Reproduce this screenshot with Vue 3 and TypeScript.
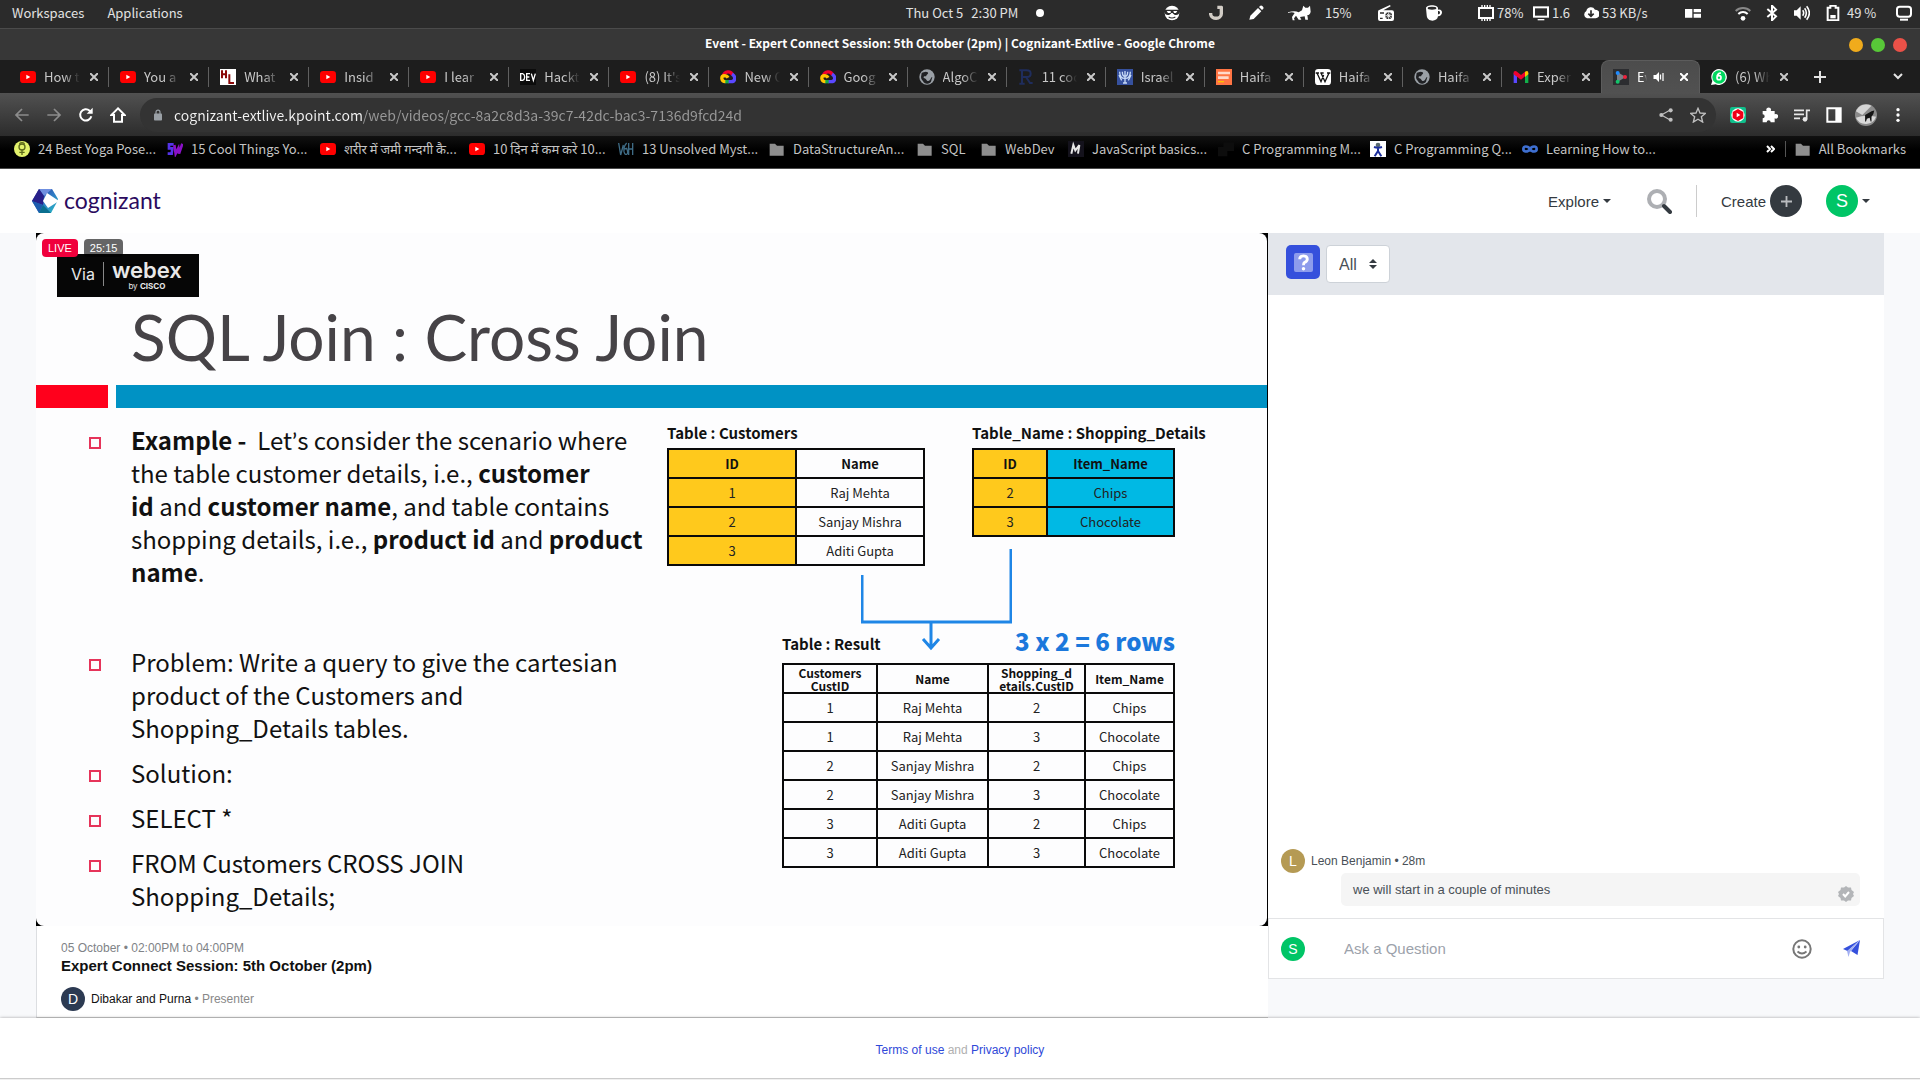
<script setup lang="ts">
import { ref } from 'vue'

interface TraySlot { icon?: string; text?: string; width: number }
interface Tab { icon: string; label: string; active?: boolean }
interface Bookmark { icon: string; label: string; width: number }

const youtube = '<rect y="3" width="24" height="18" rx="5" fill="#f00"/><path d="M9.5 8.5l6 3.5-6 3.5z" fill="#fff"/>'
const globe = '<circle cx="12" cy="12" r="11.5" fill="#9aa0a6"/><path d="M4 6c3-1 6-3 9-1 2 2-1 3-2 5s-3 0-4 2 3 2 4 4 3 3 5 1 1-4 4-5l-2 7c-3 4-9 4-11 1-1-3-4-4-4-8z" fill="#202124"/>'
const cloudLogo = '<path d="M5 10C7 3 16 2 19 9" fill="none" stroke="#f0002f" stroke-width="5"/><path d="M18 8c6 3 5 11-1 11h-5" fill="none" stroke="#5a48ff" stroke-width="5"/><path d="M13 19H7" fill="none" stroke="#12a84a" stroke-width="5"/><path d="M8 19c-6 0-7-8-2-9 3 0 5 1 6 3" fill="none" stroke="#ffc400" stroke-width="5"/>'
const folder = '<path d="M1 4h8l3 3h10v15H1z" fill="#8e8e8e"/>'

const glyphs: Record<string, string> = {
  youtube, globe, cloudLogo, folder,
  face: '<circle cx="12" cy="12" r="11" fill="#fff"/><path d="M0 7h24v2c-1 5-3 6-6 6-4 0-4-3-6-3s-2 3-6 3c-3 0-5-1-6-6z" fill="#2b2b2b"/><path d="M4 9h6v3H6zM14 9h6l-2 3h-3z" fill="#fff"/><path d="M7 18q5 3 10 0" stroke="#2b2b2b" stroke-width="1.6" fill="none"/>',
  magnet: '<path d="M14 3.500h7M20 2v11c0 9-15 9-16 1v-2" fill="none" stroke="#d2cdc6" stroke-width="5"/>',
  pencil: '<path d="M2 22l1.500-6L15 4.500l5 5L8.500 21zM16.500 3l2-2q1.500-1 3 .5l1 1q1.500 1.500.5 3l-2 2z" fill="#fff"/>',
  cat: '<path d="M0 11q10-3 16 0l5-3 2-7 3 3h4l3-3 1 9q-1 5-5 5l1 7h-4l-1-5-7 1 2 4h-4l-4-6-3 4 1 3h-3l-1-5 4-6q-4-2-10 0z" fill="#fff"/>',
  radio: '<path d="M1 8L18 0l1 2L8 8h13q3 0 3 3v10q0 3-3 3H3q-3 0-3-3V11q0-3 1-3z" fill="#fff"/><circle cx="16" cy="16" r="5" fill="#2b2b2b"/><path d="M13 13l6 6M19 13l-6 6M16 11v10M11 16h10" stroke="#fff" stroke-width="1.200"/><path d="M3 12h6M3 20h4" stroke="#2b2b2b" stroke-width="2"/>',
  cup: '<path d="M0 5c0-6 18-6 18 0v2c8-2 8 10 0 10-1 9-17 9-17-2z" fill="#fff"/><ellipse cx="9" cy="5" rx="6.500" ry="2.200" fill="#2b2b2b"/><path d="M18 9c4-1 4 5 0 5z" fill="#2b2b2b"/>',
  chip: '<rect x="1.500" y="4.500" width="21" height="15" fill="none" stroke="#fff" stroke-width="3"/><path d="M6 0v4M10 0v4M14 0v4M18 0v4M6 20v4M10 20v4M14 20v4M18 20v4" stroke="#fff" stroke-width="2"/>',
  monitor: '<rect x="1.500" y="3.500" width="21" height="14" fill="none" stroke="#fff" stroke-width="3"/><path d="M7 21h10v2H7z" fill="#fff"/>',
  cloud: '<path d="M6 20a6 6 0 0 1-1-11 7 7 0 0 1 13-2 6.500 6.500 0 0 1 1 13z" fill="#fff"/><path d="M12 8v8M8 13l4 4 4-4" stroke="#2b2b2b" stroke-width="2.500" fill="none"/>',
  tiles: '<path d="M0 6h11v13H0zM13 6h11v5H13zM13 13h11v6H13z" fill="#fff"/>',
  wifi: '<path d="M1 9c6-6 16-6 22 0" stroke="#888" stroke-width="3" fill="none"/><path d="M5 13.500c4-4 10-4 14 0" stroke="#fff" stroke-width="3" fill="none"/><circle cx="12" cy="20" r="3.500" fill="#fff"/>',
  bluetooth: '<path d="M5 6l13 11-6 6V1l6 6L5 18" stroke="#fff" stroke-width="3" fill="none"/>',
  volume: '<path d="M0 8h4l6-6v20l-6-6H0z" fill="#fff"/><path d="M13 8q3 4 0 8M16 5q5 7 0 14M19 2q8 10 0 20" stroke="#fff" stroke-width="2.400" fill="none"/>',
  battery: '<path d="M8 1h8v3h4v19H4V4h4z" fill="none" stroke="#fff" stroke-width="3"/><path d="M8 15h8v5H8z" fill="#fff"/>',
  screen: '<rect x="1.500" y="2.500" width="21" height="15" rx="4" fill="none" stroke="#fff" stroke-width="3"/><path d="M6 22h12" stroke="#fff" stroke-width="3"/>',
  hl: '<path d="M0 0h24v24H0z" fill="#fff"/><path d="M3 2v12M9 2v12M3 8h6M14 8v13h7" stroke="#8b0a0a" stroke-width="3" fill="none"/>',
  dev: '<path d="M0 0h24v24H0z" fill="#0c0c0c"/><path d="M1 7v10h3q3-1 3-5t-3-5zM15 7h-5v10h5M10 12h4M17 7l3 10 3-10" fill="none" stroke="#fff" stroke-width="2"/>',
  serifR: '<path d="M6 2v20M2 2h11q6 0 6 5t-6 5H7M12 12l6 9h4M2 22h8" fill="none" stroke="#1f2d5c" stroke-width="3"/>',
  israel: '<path d="M0 0h24v24H0z" fill="#36519e"/><path d="M4 4q0 10 8 10t8-10M8 4q0 7 4 7t4-7M12 3v18M9 21h6M3 9l4 8M21 9l-4 8" stroke="#c9dcf7" stroke-width="2" fill="none"/>',
  haifa: '<path d="M0 0h24v24H0z" fill="#ff7544"/><path d="M3 6h18M3 13h16" stroke="#ffd9cb" stroke-width="4"/><path d="M3 19h9" stroke="#ffc400" stroke-width="2"/>',
  wiki: '<rect width="24" height="24" rx="5" fill="#fff"/><path d="M3 6l6 13 4-10M9 6l6 13 6-13M1 6h5M8 6h5M18 6h5" stroke="#111" stroke-width="2" fill="none"/>',
  gmail: '<path d="M1 6v15h5V11z" fill="#5a48ff"/><path d="M23 6v15h-5V11z" fill="#12b04a"/><path d="M1 4q3-2 5 0l6 5 6-5v7l-6 5-11-8z" fill="#f0002f"/><path d="M18 4q5-3 5 2v2l-5 4z" fill="#ffc400"/>',
  kpoint: '<path d="M0 0h24v24H0z" fill="#2c2d30"/><path d="M6 4v16l13-8z" fill="#7b7f86"/><circle cx="7" cy="6" r="3" fill="#1f8bff"/><circle cx="7" cy="19" r="3" fill="#12c46a"/><circle cx="18" cy="12" r="3" fill="#f0203c"/>',
  whatsapp: '<path d="M12 0a12 12 0 1 1-5 23l-7 1 2-6A12 12 0 0 1 12 0z" fill="#fff"/><circle cx="12" cy="12" r="10" fill="#00d95f"/><path d="M15 6q-6 0-6 7a3 3 0 1 0 3-3q-3 0-3 3" fill="none" stroke="#fff" stroke-width="2.500"/>',
  yoga: '<ellipse cx="12" cy="12" rx="12" ry="12" fill="#e3f36c"/><circle cx="12" cy="9" r="4.500" fill="none" stroke="#5d6a1a" stroke-width="2"/><path d="M12 13v8M8 17h8M8 4q4-3 8 0" fill="none" stroke="#5d6a1a" stroke-width="2"/>',
  sw: '<path d="M10 5H3v6h5l-1 8H1" stroke="#5533e8" stroke-width="4" fill="none"/><path d="M11 6l2 13 4-8 1 8 5-15" stroke="#8a10c8" stroke-width="4" fill="none"/>',
  v6h: '<path d="M1 3l3 18L8 6M13 3q-5 5-4 13 1 5 4 4t0-9l-3 1M16 3v18M22 3v18M16 12h6" stroke="#3f6c86" stroke-width="2" fill="none"/>',
  mdn: '<path d="M0 0h24v24H0z" fill="#14121c"/><path d="M5 19L8 6l3 8 6-8-2 13" stroke="#e8e8e8" stroke-width="3" fill="none"/>',
  dark: '<path d="M8 2h16v13H14v8H0V9h8z" fill="#0d0d0d"/>',
  stick: '<path d="M0 0h24v24H0z" fill="#fff"/><circle cx="12" cy="6" r="3.500" fill="#5a6a70"/><path d="M6 9q6 2 12 0M12 9v6l-5 8M12 15l5 8" stroke="#1c2f9c" stroke-width="3" fill="none"/>',
  infinity: '<path d="M12 12c3-5 10-5 10 0s-7 5-10 0-10-5-10 0 7 5 10 0z" fill="none" stroke="#3e6fd0" stroke-width="4"/>'
}

const tray: TraySlot[] = [
  { icon: 'face', width: 44 }, { icon: 'magnet', width: 40 }, { icon: 'pencil', width: 40 },
  { icon: 'cat', width: 37 }, { text: '15%', width: 53 }, { icon: 'radio', width: 48 },
  { icon: 'cup', width: 52 }, { icon: 'chip', width: 19 }, { text: '78%', width: 36 },
  { icon: 'monitor', width: 19 }, { text: '1.6', width: 31 }, { icon: 'cloud', width: 19 },
  { text: '53 KB/s', width: 83 }, { icon: 'tiles', width: 50 }, { icon: 'wifi', width: 29 },
  { icon: 'bluetooth', width: 30 }, { icon: 'volume', width: 31 }, { icon: 'battery', width: 22 },
  { text: '49 %', width: 49 }, { icon: 'screen', width: 16 }
]

const tabs: Tab[] = [
  { icon: 'youtube', label: 'How t' }, { icon: 'youtube', label: 'You a' },
  { icon: 'hl', label: 'What' }, { icon: 'youtube', label: 'Insid' },
  { icon: 'youtube', label: 'I lear' }, { icon: 'dev', label: 'Hackt' },
  { icon: 'youtube', label: "(8) It's" }, { icon: 'cloudLogo', label: 'New C' },
  { icon: 'cloudLogo', label: 'Goog' }, { icon: 'globe', label: 'AlgoC' },
  { icon: 'serifR', label: '11 coo' }, { icon: 'israel', label: 'Israel' },
  { icon: 'haifa', label: 'Haifa' }, { icon: 'wiki', label: 'Haifa' },
  { icon: 'globe', label: 'Haifa' }, { icon: 'gmail', label: 'Exper' },
  { icon: 'kpoint', label: 'Ev', active: true }, { icon: 'whatsapp', label: '(6) Wh' }
]

const bookmarks: Bookmark[] = [
  { icon: 'yoga', label: '24 Best Yoga Pose...', width: 113 },
  { icon: 'sw', label: '15 Cool Things Yo...', width: 113 },
  { icon: 'youtube', label: 'शरीर में जमी गन्दगी कै...', width: 109 },
  { icon: 'youtube', label: '10 दिन में कम करे 10...', width: 109 },
  { icon: 'v6h', label: '13 Unsolved Myst...', width: 111 },
  { icon: 'folder', label: 'DataStructureAn...', width: 108 },
  { icon: 'folder', label: 'SQL', width: 24 },
  { icon: 'folder', label: 'WebDev', width: 47 },
  { icon: 'mdn', label: 'JavaScript basics...', width: 110 },
  { icon: 'dark', label: 'C Programming M...', width: 112 },
  { icon: 'stick', label: 'C Programming Q...', width: 112 },
  { icon: 'infinity', label: 'Learning How to...', width: 106 }
]

const customers = [['1', 'Raj Mehta'], ['2', 'Sanjay Mishra'], ['3', 'Aditi Gupta']]
const shopping = [['2', 'Chips'], ['3', 'Chocolate']]
const result = customers.flatMap(([id, name]) => shopping.map(([sid, item]) => [id, name, sid, item]))

const url = ref('cognizant-extlive.kpoint.com/web/videos/gcc-8a2c8d3a-39c7-42dc-bac3-7136d9fcd24d')
const filter = ref('All')
const question = ref('')
</script>

<template>
  <div class="desktop">
    <header class="system-bar">
      <nav class="system-menu">
        <button>Workspaces</button>
        <button>Applications</button>
      </nav>
      <div class="clock"><span>Thu Oct 5</span><span>2:30 PM</span></div>
      <div class="tray">
        <span class="notice-dot"></span>
        <div class="tray-slots">
          <span v-for="(slot, i) in tray" :key="i" class="slot" :style="{ width: slot.width + 'px' }">
            <svg v-if="slot.icon" :class="['glyph', { wide: slot.icon === 'cat' }]" :viewBox="slot.icon === 'cat' ? '0 0 36 24' : '0 0 24 24'"><g v-html="glyphs[slot.icon]"></g></svg>
            <template v-else>{{ slot.text }}</template>
          </span>
        </div>
      </div>
    </header>

    <div class="title-bar">
      <span class="window-title">Event - Expert Connect Session: 5th October (2pm) | Cognizant-Extlive - Google Chrome</span>
      <div class="window-buttons">
        <button class="min" aria-label="Minimize"></button>
        <button class="max" aria-label="Maximize"></button>
        <button class="close" aria-label="Close"></button>
      </div>
    </div>

    <div class="tab-strip">
      <div class="tabs">
        <div v-for="(tab, i) in tabs" :key="i" :class="['tab', { active: tab.active }]">
          <svg class="glyph" viewBox="0 0 24 24"><g v-html="glyphs[tab.icon]"></g></svg>
          <span class="tab-label">{{ tab.label }}</span>
          <svg v-if="tab.active" class="speaker" viewBox="0 0 24 24"><path d="M1 8h5l6-6v20l-6-6H1z" fill="#fff" /><path d="M15 7v10M20 4v16" stroke="#fff" stroke-width="2.500" /></svg>
          <button class="tab-close" aria-label="Close tab"><svg viewBox="0 0 8 8"><path d="M0 0l8 8M8 0L0 8" stroke="currentColor" stroke-width="2" /></svg></button>
        </div>
      </div>
      <div class="tab-tools">
        <button aria-label="New tab"><svg width="12" height="12" viewBox="0 0 12 12"><path d="M6 0v12M0 6h12" stroke="#e4e4e4" stroke-width="2" /></svg></button>
        <button aria-label="Search tabs"><svg width="10" height="8" viewBox="0 0 10 8"><path d="M1 1l4 4 4-4" fill="none" stroke="#e4e4e4" stroke-width="2" /></svg></button>
      </div>
    </div>

    <div class="toolbar">
      <div class="nav-buttons">
        <button aria-label="Back"><svg viewBox="0 0 24 24"><path d="M22 12H4M12 3l-9 9 9 9" fill="none" stroke="#8c8c8c" stroke-width="2.600" /></svg></button>
        <button aria-label="Forward"><svg viewBox="0 0 24 24"><path d="M2 12h18M12 3l9 9-9 9" fill="none" stroke="#8c8c8c" stroke-width="2.600" /></svg></button>
        <button aria-label="Reload"><svg viewBox="0 0 24 24"><path d="M20 14a8.500 8.500 0 1 1-2.500-8.500L20 8" fill="none" stroke="#fff" stroke-width="3" /><path d="M22 1v9h-9z" fill="#fff" /></svg></button>
        <button aria-label="Home"><svg viewBox="0 0 24 24"><path d="M12 2L2 12h4v10h12V12h4z" fill="none" stroke="#fff" stroke-width="3" /></svg></button>
      </div>
      <form class="omnibox" @submit.prevent>
        <svg class="lock" viewBox="0 0 10 14"><path d="M1 5h8a1 1 0 0 1 1 1v7a1 1 0 0 1-1 1H1a1 1 0 0 1-1-1V6a1 1 0 0 1 1-1z" fill="#9aa0a6" /><path d="M2.500 6V3.500a2.500 2.500 0 0 1 5 0V6" fill="none" stroke="#9aa0a6" stroke-width="1.500" /></svg>
        <input v-model="url" class="url" aria-label="Address" spellcheck="false" />
        <button aria-label="Share"><svg width="14" height="16" viewBox="0 0 24 24"><path d="M20 3L4 12l16 9" fill="none" stroke="#c0c0c0" stroke-width="2" /><circle cx="20" cy="4" r="3.500" fill="#c0c0c0" /><circle cx="4" cy="12" r="3.500" fill="#c0c0c0" /><circle cx="20" cy="20" r="3.500" fill="#c0c0c0" /></svg></button>
        <button aria-label="Bookmark"><svg width="16" height="16" viewBox="0 0 24 24"><path d="M12 2l3 7 8 .6-6 5 2 8-7-4.200-7 4.200 2-8-6-5L9 9z" fill="none" stroke="#c0c0c0" stroke-width="2" /></svg></button>
      </form>
      <div class="extensions">
        <button aria-label="Video extension"><svg viewBox="0 0 24 24"><rect width="24" height="24" rx="3" fill="#10c08c" /><circle cx="12" cy="12" r="10" fill="#fff" /><path d="M12 3l8 4.500v9L12 21l-8-4.500v-9z" fill="#f00018" /><path d="M10 8.500l5.500 3.500-5.500 3.500z" fill="#fff" /></svg></button>
        <button aria-label="Extensions"><svg viewBox="0 0 24 24"><path d="M7 6a3.500 3.500 0 1 1 6 0h6v5a3.500 3.500 0 1 1 0 6v6h-6a3 3 0 0 0-6 0H1v-6a3 3 0 0 0 0-6V6z" fill="#fff" /></svg></button>
        <button aria-label="Media"><svg viewBox="0 0 24 24"><path d="M0 5h15M0 11h15M0 17h9M19 18V5h5" fill="none" stroke="#e8e8e8" stroke-width="2.500" /><circle cx="16.500" cy="18.500" r="3.500" fill="#e8e8e8" /></svg></button>
        <button aria-label="Side panel"><svg viewBox="0 0 24 24"><path d="M2 2h20v20H2z" fill="none" stroke="#fff" stroke-width="3" /><path d="M14 2h8v20h-8z" fill="#fff" /></svg></button>
        <button class="profile" aria-label="Profile"><svg viewBox="0 0 24 24"><circle cx="12" cy="12" r="12" fill="#8b8b8b" /><path d="M1 8A12 12 0 0 1 18 2L8 12z" fill="#d5d5d5" /><path d="M1 15q10-4 22-1a12 12 0 0 1-22 1z" fill="#d9d9d9" /><path d="M11 12q4-2 7-4l3-1-1 4-2 3v5h-1l-1-4-3 1-1 3h-1z" fill="#151515" /></svg></button>
        <button aria-label="Menu"><svg viewBox="0 0 24 24"><circle cx="12" cy="4" r="2.500" fill="#fff" /><circle cx="12" cy="12" r="2.500" fill="#fff" /><circle cx="12" cy="20" r="2.500" fill="#fff" /></svg></button>
      </div>
    </div>

    <nav class="bookmarks">
      <a v-for="(b, i) in bookmarks" :key="i" href="#" class="bookmark">
        <svg class="glyph" viewBox="0 0 24 24"><g v-html="glyphs[b.icon]"></g></svg>
        <span :style="{ width: b.width + 'px' }">{{ b.label }}</span>
      </a>
      <div class="bookmarks-end">
        <button class="more" aria-label="More bookmarks"><svg width="9" height="8" viewBox="0 0 9 8"><path d="M1 1l3 3-3 3M5 1l3 3-3 3" fill="none" stroke="#fff" stroke-width="2" /></svg></button>
        <a href="#" class="bookmark"><svg class="glyph" viewBox="0 0 24 24"><g v-html="glyphs.folder"></g></svg>All Bookmarks</a>
      </div>
    </nav>

    <header class="site-header">
      <a href="#" class="brand">
        <svg width="28" height="24" viewBox="0 0 28 24">
          <defs><linearGradient id="hex" x1="0" y1="0" x2="1" y2="1"><stop offset="0" stop-color="#2a2c8c" /><stop offset=".5" stop-color="#2f78c4" /><stop offset="1" stop-color="#26bfc4" /></linearGradient></defs>
          <path d="M7 0h13l6 10-1 3-6 11H7L0 12z" fill="url(#hex)" />
          <path d="M7 0h13l-8 7z" fill="#6f8fe0" /><path d="M0 12L7 0l5 7-1 9z" fill="#28208a" /><path d="M0 12l11 4-4 8z" fill="#1d5cae" /><path d="M11 16l8 8H7z" fill="#0b6f8f" />
          <path d="M15 4l12 8-11 7-5-7z" fill="#fff" />
        </svg>
        <span>cognizant</span>
      </a>
      <nav class="site-nav">
        <button class="explore">Explore<i class="caret"></i></button>
        <button class="search" aria-label="Search"><svg width="25" height="25" viewBox="0 0 25 25"><circle cx="10" cy="10" r="8" fill="none" stroke="#adafb3" stroke-width="4" /><path d="M17 17l6 6" stroke="#343a40" stroke-width="4" stroke-linecap="round" /></svg></button>
        <button class="create">Create<span class="plus"><svg width="11" height="11" viewBox="0 0 12 12"><path d="M6 0v12M0 6h12" stroke="#b9bcbf" stroke-width="2" /></svg></span></button>
        <button class="account"><span class="avatar large green">S</span><i class="caret"></i></button>
      </nav>
    </header>

    <main class="content">
      <section class="event">
        <div class="video">
          <div class="slide">
            <div class="slide-head">
              <div class="status"><span class="live">LIVE</span><span class="elapsed">25:15</span></div>
              <div class="webex"><span class="via">Via</span><span class="webex-name"><b>webex</b><small>by <strong>CISCO</strong></small></span></div>
              <h1>SQL Join : Cross Join</h1>
            </div>
            <div class="rule"><i class="red"></i><i class="blue"></i></div>
            <div class="slide-body">
              <ul class="points">
                <li><b>Example - </b>&nbsp;Let<span class="apostrophe">’</span>s consider the scenario where<br />the table customer details, i.e., <b>customer<br />id</b> and <b>customer name</b>, and table contains<br />shopping details, i.e., <b>product id</b> and <b>product<br />name</b>.</li>
                <li class="blank"></li>
                <li>Problem: Write a query to give the cartesian<br />product of the Customers and<br />Shopping_Details tables.</li>
                <li>Solution:</li>
                <li>SELECT *</li>
                <li>FROM Customers CROSS JOIN<br />Shopping_Details;</li>
              </ul>
              <div class="diagram">
                <div class="sources">
                  <figure class="customers">
                    <figcaption id="customers-caption">Table : Customers</figcaption>
                    <table aria-labelledby="customers-caption">
                      <thead><tr><th class="gold">ID</th><th>Name</th></tr></thead>
                      <tbody><tr v-for="row in customers" :key="row[0]"><td class="gold">{{ row[0] }}</td><td>{{ row[1] }}</td></tr></tbody>
                    </table>
                  </figure>
                  <figure class="shopping">
                    <figcaption id="shopping-caption">Table_Name : Shopping_Details</figcaption>
                    <table aria-labelledby="shopping-caption">
                      <thead><tr><th class="gold">ID</th><th class="cyan">Item_Name</th></tr></thead>
                      <tbody><tr v-for="row in shopping" :key="row[0]"><td class="gold">{{ row[0] }}</td><td class="cyan">{{ row[1] }}</td></tr></tbody>
                    </table>
                  </figure>
                </div>
                <svg class="connector" width="151" height="102" viewBox="0 0 151 102"><path d="M1 26v47h149V0M70 73v26M62 90l8 9 8-9" fill="none" stroke="#1f86e6" stroke-width="3" /></svg>
                <div class="product">
                  <div class="product-head"><span>Table : Result</span><strong>3 x 2 = 6 rows</strong></div>
                  <table class="result">
                    <colgroup><col class="c1" /><col class="c2" /><col class="c3" /><col class="c4" /></colgroup>
                    <thead><tr><th>Customers<br />CustID</th><th>Name</th><th>Shopping_d<br />etails.CustID</th><th>Item_Name</th></tr></thead>
                    <tbody><tr v-for="(row, i) in result" :key="i"><td v-for="(cell, j) in row" :key="j">{{ cell }}</td></tr></tbody>
                  </table>
                </div>
              </div>
            </div>
          </div>
        </div>
        <div class="event-info">
          <p class="when">05 October • 02:00PM to 04:00PM</p>
          <h2>Expert Connect Session: 5th October (2pm)</h2>
          <p class="presenter"><span class="avatar navy">D</span><span>Dibakar and Purna <em>• Presenter</em></span></p>
        </div>
      </section>

      <aside class="chat">
        <div class="chat-head">
          <button class="ask" aria-label="Questions"><svg width="19" height="19" viewBox="0 0 20 20"><rect width="20" height="20" rx="2" fill="#8d9cec" /><path d="M6 6.500q0-3.500 4-3.500t4 3.500q0 2-3 3.500-1 .7-1 3" fill="none" stroke="#fff" stroke-width="3" /><circle cx="10" cy="16.500" r="1.800" fill="#fff" /></svg></button>
          <label class="filter">
            <select v-model="filter" aria-label="Filter questions"><option>All</option><option>Mine</option></select>
            <svg width="8" height="10" viewBox="0 0 8 10"><path d="M0 4l4-4 4 4zM0 6l4 4 4-4z" fill="#343a40" /></svg>
          </label>
        </div>
        <div class="messages">
          <p class="author"><span class="avatar olive">L</span><span>Leon Benjamin • 28m</span></p>
          <div class="bubble">
            <span>we will start in a couple of minutes</span>
            <svg width="16" height="16" viewBox="0 0 16 16"><path d="M8 0l2 1.500h3l.5 2.500L16 6l-1 2 1 2-2.500 2-.5 2.500h-3L8 16l-2-1.500H3L2.500 12 0 10l1-2-1-2 2.500-2L3 1.500h3z" fill="#b3b5b8" /><path d="M5 8l2.200 2.500L11 6" fill="none" stroke="#fff" stroke-width="2" /></svg>
          </div>
        </div>
        <form class="composer" @submit.prevent>
          <span class="avatar green">S</span>
          <input v-model="question" placeholder="Ask a Question" aria-label="Ask a Question" />
          <button type="button" aria-label="Emoji"><svg width="20" height="20" viewBox="0 0 20 20"><circle cx="10" cy="10" r="8.700" fill="none" stroke="#777" stroke-width="2" /><circle cx="6.800" cy="8" r="1.400" fill="#777" /><circle cx="13.200" cy="8" r="1.400" fill="#777" /><path d="M5.500 12.500q4.500 4 9 0" fill="none" stroke="#777" stroke-width="1.800" /></svg></button>
          <button type="submit" aria-label="Send"><svg width="17" height="17" viewBox="0 0 17 17"><path d="M17 0L0 9l4.500 2z" fill="#3550dc" /><path d="M17 0L8 11l6.500 4z" fill="#3550dc" /><path d="M4 11L16 1 7 12l-1.500 5z" fill="#a3b0f2" /></svg></button>
        </form>
      </aside>
    </main>

    <footer class="site-footer"><p><a href="#">Terms of use</a> and <a href="#">Privacy policy</a></p></footer>
  </div>
</template>

<style>
body { background: #f0f0f0; }
</style>

<style scoped>
*, *::before { box-sizing: border-box; }
button { border: 0; padding: 0; background: none; color: inherit; font: inherit; cursor: pointer; display: flex; align-items: center; justify-content: center; }
a { color: inherit; text-decoration: none; }
p, h1, h2, ul, figure { margin: 0; padding: 0; }
svg { display: block; flex: none; }
.desktop { font-family: "Liberation Sans", Arial, sans-serif; background: #f8f9fb; color: #212529; overflow: hidden; }
.system-bar, .title-bar, .tab-strip, .toolbar, .bookmarks { font-family: "Noto Sans CJK SC", "Noto Sans", sans-serif; font-size: 13px; line-height: 20px; white-space: nowrap; color: #e2e2e2; }
.glyph { width: 16px; height: 16px; }
.glyph.wide { width: 24px; }

.system-bar { height: 29px; display: grid; grid-template-columns: 1fr auto 1fr; align-items: center; padding: 0 8px 2px 12px; background: #2b2b2b; border-bottom: 1px solid #4b4b4b; }
.system-menu { display: flex; gap: 23px; }
.clock { display: flex; gap: 8px; }
.tray { display: flex; align-items: center; justify-content: space-between; padding-left: 18px; }
.notice-dot { width: 8px; height: 8px; border-radius: 50%; background: #fff; }
.tray-slots { display: flex; align-items: center; }
.slot { flex: none; }

.title-bar { height: 31px; display: grid; grid-template-columns: 1fr auto 1fr; align-items: center; padding: 0 13px; background: #373737; color: #fff; font-size: 12px; font-weight: 700; }
.window-title { grid-column: 2; padding-bottom: 3px; }
.window-buttons { display: flex; justify-content: flex-end; gap: 8px; }
.window-buttons button { width: 14px; height: 14px; border-radius: 50%; }
.min { background: #f0ab1c; }
.max { background: #58c838; }
.close { background: #ea5148; }

.tab-strip { height: 33px; display: flex; background: #1d1d1d; padding-left: 9px; }
.tabs { flex: 1; display: flex; min-width: 0; }
.tab { flex: 1 1 99px; min-width: 0; display: flex; align-items: center; padding: 0 11px; color: #c8c8c8; background: linear-gradient(#606060, #606060) no-repeat right center / 1px 20px; }
.tab:nth-child(-n + 7) { flex-basis: 100px; }
.tab-label { flex: 1; min-width: 0; margin: 0 10px 0 8px; overflow: hidden; mask-image: linear-gradient(90deg, #000 55%, transparent); }
.tab-close svg { width: 8px; height: 8px; }
.tab.active { background: linear-gradient(#4c4c4c, #515151); border: 1px solid #5c5c5c; border-bottom: 0; border-radius: 8px 8px 0 0; color: #fff; }
.tab.active .tab-label { margin-right: 6px; }
.speaker { width: 12px; height: 12px; margin-right: 15px; }
.tab:last-child, .tab:has(+ .active) { background: none; }
.tab-tools { width: 121px; display: flex; align-items: center; justify-content: space-between; padding: 0 17px 0 15px; }

.toolbar { height: 43px; display: flex; align-items: center; padding: 0 14px 0 12px; background: linear-gradient(#515151 0, #454545 14px, #2c2c2c); }
.nav-buttons { display: flex; gap: 16px; padding: 0 14px 0 2px; }
.nav-buttons svg, .extensions svg { width: 16px; height: 16px; }
.omnibox { flex: 1; height: 34px; display: flex; align-items: center; padding: 0 10px 0 14px; border-radius: 17px; background: #333; gap: 17px; }
.lock { width: 8px; height: 12px; }
.url { flex: 1; min-width: 0; border: 0; outline: 0; padding: 0; margin-left: -5px; font: inherit; font-size: 14px; height: 24px; color: transparent; background: linear-gradient(90deg, #f4f4f4 188px, #9a9a9a 188px); background-clip: text; }
.extensions { display: flex; align-items: center; gap: 16px; padding-left: 14px; }
.extensions .profile { margin: 0 -3px; }
.extensions .profile svg { width: 22px; height: 22px; }

.bookmarks { height: 33px; display: flex; align-items: center; gap: 16px; padding: 0 14px 6px; background: linear-gradient(#111, #000 14px); border-bottom: 1px solid #4b4b4b; color: #c4c4c4; }
.bookmark { display: flex; align-items: center; gap: 8px; }
.bookmarks-end { flex: 1; display: flex; align-items: center; justify-content: flex-end; }
.bookmarks-end .bookmark { margin-left: 10px; padding-left: 9px; border-left: 1px solid #555; line-height: 16px; }

.site-header { height: 64px; display: flex; justify-content: space-between; align-items: center; padding: 0 50px 0 32px; background: #fff; }
.brand { display: flex; align-items: center; gap: 4px; color: #2b0a5e; font: 23px/24px Lato, sans-serif; }
.brand span { padding-bottom: 2px; }
.site-nav { display: flex; align-items: center; color: #343a40; font-size: 15px; }
.caret { border: 4px solid transparent; border-top-color: #343a40; border-bottom: 0; margin-left: 4px; }
.search { margin: 0 24px 0 36px; }
.create { height: 32px; padding-left: 24px; border-left: 1px solid #ccc; gap: 4px; }
.plus { width: 32px; height: 32px; border-radius: 50%; background: #343a40; display: flex; align-items: center; justify-content: center; }
.account { margin-left: 24px; }
.avatar { flex: none; width: 24px; height: 24px; border-radius: 50%; display: flex; align-items: center; justify-content: center; color: #fff; font-size: 14px; }
.avatar.large { width: 32px; height: 32px; font-size: 18px; }
.green { background: #00c566; }
.olive { background: #b59a54; }
.navy { background: #2c3a52; }

.content { display: grid; grid-template-columns: minmax(0, 2fr) minmax(0, 1fr); padding: 0 36px; align-items: start; }
.video { background: #000; padding-right: 1px; aspect-ratio: 16 / 9; }
.slide { height: 100%; background: #fdfdfe; border-radius: 8px; overflow: hidden; }
.slide-head { height: 152px; padding: 6px 0 0 6px; }
.status { position: relative; display: flex; gap: 6px; height: 15px; z-index: 1; }
.status span { height: 18px; padding: 0 6px; border-radius: 4px; color: #fff; font-size: 11px; line-height: 18px; }
.live { background: #f0003c; }
.elapsed { background: rgba(0, 0, 0, .6); }
.webex { width: 142px; height: 43px; margin-left: 15px; background: #060606; color: #e8e8e8; display: flex; align-items: center; padding: 0 0 4px 14px; font-family: Inter, sans-serif; }
.via { font-size: 16px; padding-right: 8px; border-right: 1px solid #888; line-height: 24px; }
.webex-name { display: flex; flex-direction: column; align-items: center; padding: 5px 0 0 8px; }
.webex-name b { font-size: 22px; line-height: 20px; font-weight: 600; }
.webex-name small { font-size: 8px; line-height: 12px; }
h1 { margin-left: 89px; font: 400 64px/72px Lato, sans-serif; color: #464347; white-space: nowrap; margin-top: 4px; }
.rule { height: 23px; display: flex; gap: 8px; }
.red { width: 72px; background: #ff001c; }
.blue { flex: 1; background: #0092c4; }
.slide-body { display: grid; grid-template-columns: 631px 1fr; align-items: start; }
.points { list-style: none; padding: 15px 0 0 95px; display: flex; flex-direction: column; gap: 12px; font: 24px/33px "Noto Sans CJK SC", "Noto Sans", sans-serif; color: #111; white-space: nowrap; }
.points li { position: relative; min-height: 33px; }
.points li:not(.blank)::before { content: ""; position: absolute; left: -42px; top: 14px; width: 12px; height: 12px; border: 2px solid #e6345a; }
.apostrophe { font-family: Lato, sans-serif; line-height: 24px; }
.diagram { position: relative; padding-top: 12px; font-family: "Noto Sans CJK SC", "Noto Sans", sans-serif; color: #222; }
.sources { display: flex; align-items: flex-start; gap: 47px; }
.diagram table { width: 100%; border-collapse: collapse; table-layout: fixed; font-size: 13px; line-height: 20px; text-align: center; }
.diagram figcaption { font-size: 15px; line-height: 26px; padding-bottom: 2px; font-weight: 700; white-space: nowrap; color: #111; }
.diagram th, .diagram td { height: 29px; padding: 0; border: 2px solid #0a0a0a; white-space: nowrap; }
.diagram th { color: #111; }
.customers { width: 258px; }
.shopping { width: 203px; }
.shopping .gold { width: 74px; }
.gold { background: #ffc91c; }
.cyan { background: #00b9e4; }
.connector { position: absolute; left: 194px; top: 141px; }
.product { width: 393px; margin: 62px 0 0 115px; }
.product-head { display: flex; justify-content: space-between; align-items: center; height: 35px; padding-bottom: 3px; font-size: 15px; line-height: 28px; font-weight: 700; color: #111; }
.product-head strong { font-size: 24px; color: #1b78dc; padding-bottom: 6px; }
.diagram .result th { line-height: 13px; font-size: 12px; }
.c1 { width: 94px; }
.c2 { width: 111px; }
.c3 { width: 97px; }

.event-info { height: 92px; padding: 14px 24px 0; background: #fff; border-left: 1px solid #dcdee1; border-bottom: 1px solid #ccc; color: #111; font-size: 12px; line-height: 16px; }
.when { color: #808387; }
h2 { font-size: 15px; line-height: 20px; font-weight: 700; }
.presenter { display: flex; align-items: center; gap: 6px; margin-top: 11px; }
.presenter em { font-style: normal; color: #888; }

.chat { background: #fff; }
.chat-head { height: 62px; padding: 12px 18px; display: flex; align-items: flex-start; gap: 6px; background: #e3e6eb; }
.ask { width: 34px; height: 34px; border-radius: 5px; background: #3550dc; }
.filter { position: relative; }
.filter select { appearance: none; width: 64px; height: 38px; border: 1px solid #cdd2d8; border-radius: 4px; background: #fff; padding: 0 12px; font: 16px "Liberation Sans", sans-serif; color: #495057; }
.filter svg { position: absolute; right: 13px; top: 14px; }
.messages { height: 623px; display: flex; flex-direction: column; justify-content: flex-end; padding: 0 24px 12px 13px; color: #495057; }
.author { display: flex; align-items: center; gap: 6px; font-size: 12px; line-height: 24px; }
.bubble { margin-left: 60px; height: 33px; padding: 0 6px 0 12px; border-radius: 5px; background: #f5f5f5; display: flex; justify-content: space-between; align-items: center; font-size: 13px; }
.bubble svg { margin-top: 8px; }
.composer { height: 61px; display: flex; align-items: center; border: 1px solid #e3e4e6; padding: 0 23px 0 12px; }
.composer input { flex: 1; min-width: 0; border: 0; outline: 0; padding: 0; margin-left: 39px; font: 15px "Liberation Sans", sans-serif; color: #495057; }
.composer input::placeholder { color: #9ca2ab; }
.composer button { margin-left: 31px; }

.site-footer { position: relative; height: 61px; display: flex; align-items: center; justify-content: center; padding-top: 3px; background: #fff; border-bottom: 1px solid #ccc; box-shadow: 0 0 3px rgba(0, 0, 0, .35); font-size: 12px; color: #b0b0b0; }
.site-footer a { color: #2f48d8; }
</style>
